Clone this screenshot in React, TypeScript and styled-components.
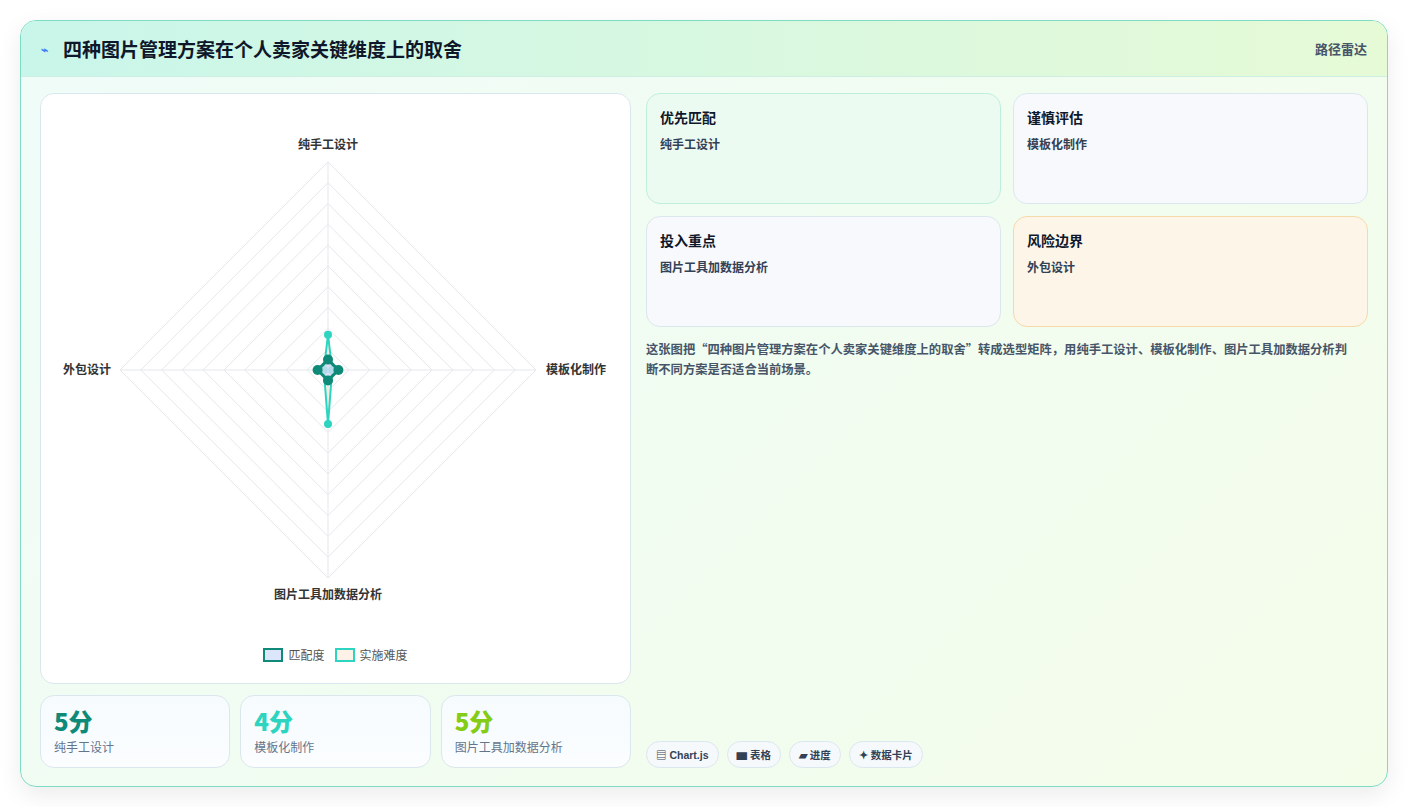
import React from "react";
import styled, { createGlobalStyle } from "styled-components";

const Global = createGlobalStyle`
  body { margin: 0; background: #fff; font-family: "Noto Sans CJK SC", "Noto Sans", sans-serif; }
`;

const Page = styled.div`
  padding: 20px;
  height: 807px;
  box-sizing: border-box;
`;

const Card = styled.div`
  height: 767px;
  box-sizing: border-box;
  border: 1px solid #7fdcc4;
  border-radius: 16px;
  background: linear-gradient(135deg, #effcf8 0%, #f4fdea 100%);
  box-shadow: 0 8px 24px rgba(0, 0, 0, 0.08);
  display: flex;
  flex-direction: column;
  overflow: hidden;
`;

const Header = styled.div`
  height: 55px;
  flex-shrink: 0;
  display: flex;
  align-items: center;
  justify-content: space-between;
  padding: 0 20px;
  background: linear-gradient(90deg, #c9f6ea 0%, #e6fad6 100%);
  border-bottom: 1px solid #cdeee2;
`;

const Title = styled.h1`
  margin: 0;
  font-size: 19px;
  font-weight: 700;
  color: #0f172a;
  display: flex;
  align-items: center;
  gap: 10px;
`;

const TitleIcon = styled.span`
  color: #3b82f6;
  font-size: 12px;
  width: 12px;
`;

const HeadTag = styled.span`
  font-size: 13px;
  color: #475569;
  font-weight: 600;
`;

const Body = styled.div`
  flex: 1;
  display: grid;
  grid-template-columns: 591px 1fr;
  gap: 15px;
  padding: 16px 19px 18px 19px;
  min-height: 0;
`;

const LeftCol = styled.div`
  display: flex;
  flex-direction: column;
  gap: 11px;
`;

const ChartPanel = styled.div`
  height: 591px;
  box-sizing: border-box;
  background: #fff;
  border: 1px solid #dbe7ee;
  border-radius: 14px;
  position: relative;
`;

const Legend = styled.div`
  position: absolute;
  bottom: 20px;
  left: 0;
  right: 0;
  display: flex;
  justify-content: center;
  gap: 10px;
  font-size: 12px;
  color: #555;
`;

const LegendItem = styled.span`
  display: flex;
  align-items: center;
  gap: 5px;
`;

const Swatch = styled.span<{ $border: string; $fill: string }>`
  width: 16px;
  height: 10px;
  border: 2px solid ${(p) => p.$border};
  background: ${(p) => p.$fill};
`;

const Stats = styled.div`
  display: grid;
  grid-template-columns: repeat(3, 1fr);
  gap: 10px;
`;

const Stat = styled.div`
  height: 73px;
  box-sizing: border-box;
  border: 1px solid #dbe7ee;
  border-radius: 14px;
  background: linear-gradient(180deg, #f6fbfe, #fbfdff);
  padding: 9px 13px;
`;

const StatValue = styled.div<{ $color: string }>`
  font-size: 24px;
  font-weight: 800;
  color: ${(p) => p.$color};
  line-height: 32px;
`;

const StatLabel = styled.div`
  font-size: 12px;
  color: #64748b;
  margin-top: 1px;
`;

const RightCol = styled.div`
  display: flex;
  flex-direction: column;
`;

const Grid = styled.div`
  display: grid;
  grid-template-columns: 1fr 1fr;
  gap: 12px;
`;

const Box = styled.div<{ $bg: string; $border: string }>`
  height: 111px;
  box-sizing: border-box;
  border-radius: 14px;
  border: 1px solid ${(p) => p.$border};
  background: ${(p) => p.$bg};
  padding: 13px 13px;
`;

const BoxTitle = styled.div`
  font-size: 14px;
  font-weight: 700;
  color: #0f172a;
`;

const BoxText = styled.div`
  font-size: 12px;
  color: #334155;
  font-weight: 600;
  margin-top: 8px;
`;

const Note = styled.p`
  margin: 12px 10px 0 0;
  font-size: 12.3px;
  line-height: 20px;
  color: #475569;
  font-weight: 600;
`;

const Tags = styled.div`
  margin-top: auto;
  display: flex;
  gap: 8px;
`;

const Tag = styled.span`
  height: 27px;
  box-sizing: border-box;
  padding: 0 9px;
  display: flex;
  align-items: center;
  gap: 3px;
  border-radius: 14px;
  border: 1px solid #dbe7ee;
  background: #f6f9fc;
  font-size: 10.5px;
  font-weight: 700;
  color: #334155;
  font-family: "Liberation Sans", "Noto Sans CJK SC", sans-serif;
`;

const cx = 287;
const cy = 276;
const R = 208;
const pt = (i: number, v: number) => {
  const a = -Math.PI / 2 + (i * Math.PI) / 2;
  return [cx + Math.cos(a) * R * v, cy + Math.sin(a) * R * v];
};
const poly = (vals: number[]) => vals.map((v, i) => pt(i, v).join(",")).join(" ");

const labels = ["纯手工设计", "模板化制作", "图片工具加数据分析", "外包设计"];
const match = [0.05, 0.05, 0.05, 0.05];
const diff = [0.17, 0.02, 0.26, 0.02];

const Radar = () => (
  <svg width="589" height="520" style={{ display: "block" }}>
    {Array.from({ length: 10 }, (_, k) => (
      <polygon key={k} points={poly([1, 1, 1, 1].map(() => (k + 1) / 10))} fill="none" stroke="#e5e7eb" strokeWidth="1" />
    ))}
    {[0, 1, 2, 3].map((i) => {
      const [x, y] = pt(i, 1);
      return <line key={i} x1={cx} y1={cy} x2={x} y2={y} stroke="#e5e7eb" />;
    })}
    <polygon points={poly(diff)} fill="rgba(251,230,215,0.6)" stroke="#2dd4bf" strokeWidth="2" />
    {diff.map((v, i) => {
      const [x, y] = pt(i, v);
      return <circle key={i} cx={x} cy={y} r="4" fill="#2dd4bf" />;
    })}
    <polygon points={poly(match)} fill="rgba(210,220,245,0.8)" stroke="#0f8a78" strokeWidth="3" />
    {match.map((v, i) => {
      const [x, y] = pt(i, v);
      return <circle key={i} cx={x} cy={y} r="5" fill="#0f8a78" />;
    })}
    <g fontSize="12" fill="#333" fontWeight="600" fontFamily="Noto Sans CJK SC, sans-serif">
      <text x={cx} y={55} textAnchor="middle">{labels[0]}</text>
      <text x={505} y={280} textAnchor="start">{labels[1]}</text>
      <text x={cx} y={505} textAnchor="middle">{labels[2]}</text>
      <text x={70} y={280} textAnchor="end">{labels[3]}</text>
    </g>
  </svg>
);

export default function App() {
  return (
    <Page>
      <Global />
      <Card>
        <Header>
          <Title>
            <TitleIcon>⌁</TitleIcon>
            四种图片管理方案在个人卖家关键维度上的取舍
          </Title>
          <HeadTag>路径雷达</HeadTag>
        </Header>
        <Body>
          <LeftCol>
            <ChartPanel>
              <Radar />
              <Legend>
                <LegendItem>
                  <Swatch $border="#0f8a78" $fill="#dbe6fb" />匹配度
                </LegendItem>
                <LegendItem>
                  <Swatch $border="#2dd4bf" $fill="#fdf1e8" />实施难度
                </LegendItem>
              </Legend>
            </ChartPanel>
            <Stats>
              <Stat>
                <StatValue $color="#0f8a78">5分</StatValue>
                <StatLabel>纯手工设计</StatLabel>
              </Stat>
              <Stat>
                <StatValue $color="#2dd4bf">4分</StatValue>
                <StatLabel>模板化制作</StatLabel>
              </Stat>
              <Stat>
                <StatValue $color="#84cc16">5分</StatValue>
                <StatLabel>图片工具加数据分析</StatLabel>
              </Stat>
            </Stats>
          </LeftCol>
          <RightCol>
            <Grid>
              <Box $bg="#ecfbf2" $border="#bfeedd">
                <BoxTitle>优先匹配</BoxTitle>
                <BoxText>纯手工设计</BoxText>
              </Box>
              <Box $bg="#f7f9fc" $border="#dbe7ee">
                <BoxTitle>谨慎评估</BoxTitle>
                <BoxText>模板化制作</BoxText>
              </Box>
              <Box $bg="#f7f9fc" $border="#dbe7ee">
                <BoxTitle>投入重点</BoxTitle>
                <BoxText>图片工具加数据分析</BoxText>
              </Box>
              <Box $bg="#fdf6e8" $border="#f5d9a8">
                <BoxTitle>风险边界</BoxTitle>
                <BoxText>外包设计</BoxText>
              </Box>
            </Grid>
            <Note>
              这张图把“四种图片管理方案在个人卖家关键维度上的取舍”转成选型矩阵，用纯手工设计、模板化制作、图片工具加数据分析判断不同方案是否适合当前场景。
            </Note>
            <Tags>
              <Tag>▤ Chart.js</Tag>
              <Tag>▆ 表格</Tag>
              <Tag>▰ 进度</Tag>
              <Tag>✦ 数据卡片</Tag>
            </Tags>
          </RightCol>
        </Body>
      </Card>
    </Page>
  );
}
